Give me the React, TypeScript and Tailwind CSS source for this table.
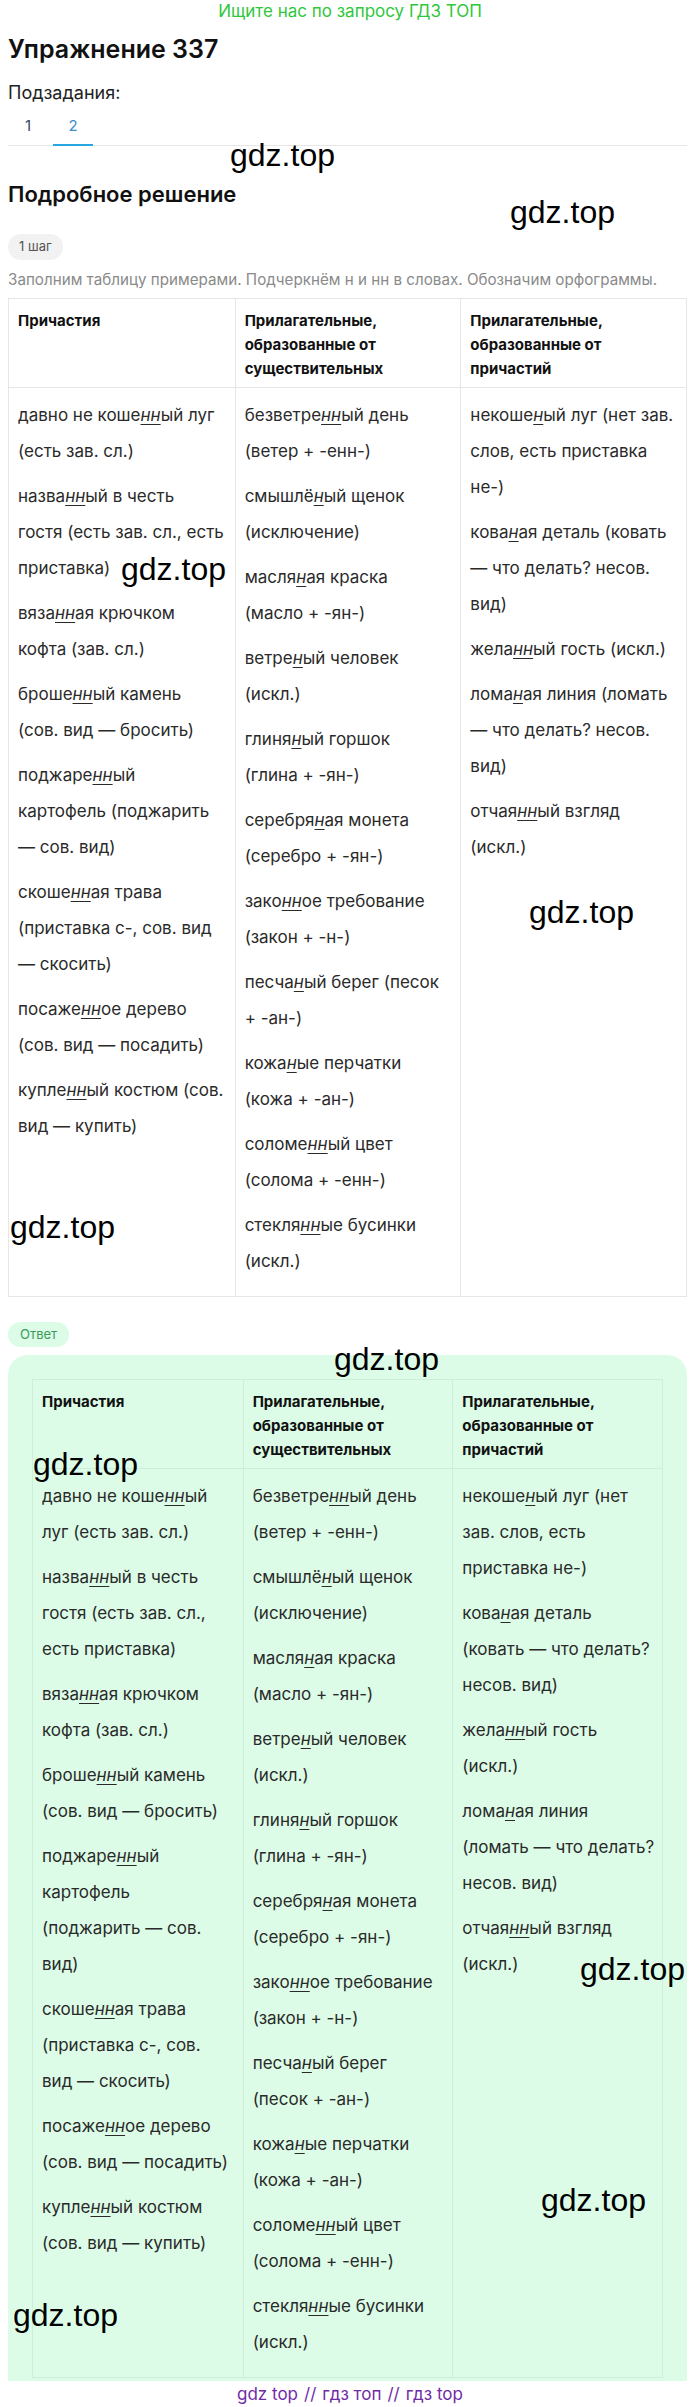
import React from 'react';

type Item = string[];
type TableData = { head: string[][]; cols: Item[][] };

/* words: the letters in [] are the underlined italic н / нн */
const topTable: TableData = {
  head: [['Причастия'], ['Прилагательные,', 'образованные от', 'существительных'], ['Прилагательные,', 'образованные от', 'причастий']],
  cols: [
    [
      ['давно не коше[нн]ый луг', '(есть зав. сл.)'],
      ['назва[нн]ый в честь', 'гостя (есть зав. сл., есть', 'приставка)'],
      ['вяза[нн]ая крючком', 'кофта (зав. сл.)'],
      ['броше[нн]ый камень', '(сов. вид — бросить)'],
      ['поджаре[нн]ый', 'картофель (поджарить', '— сов. вид)'],
      ['скоше[нн]ая трава', '(приставка с-, сов. вид', '— скосить)'],
      ['посаже[нн]ое дерево', '(сов. вид — посадить)'],
      ['купле[нн]ый костюм (сов.', 'вид — купить)'],
    ],
    [
      ['безветре[нн]ый день', '(ветер + -енн-)'],
      ['смышлё[н]ый щенок', '(исключение)'],
      ['масля[н]ая краска', '(масло + -ян-)'],
      ['ветре[н]ый человек', '(искл.)'],
      ['глиня[н]ый горшок', '(глина + -ян-)'],
      ['серебря[н]ая монета', '(серебро + -ян-)'],
      ['зако[нн]ое требование', '(закон + -н-)'],
      ['песча[н]ый берег (песок', '+ -ан-)'],
      ['кожа[н]ые перчатки', '(кожа + -ан-)'],
      ['соломе[нн]ый цвет', '(солома + -енн-)'],
      ['стекля[нн]ые бусинки', '(искл.)'],
    ],
    [
      ['некоше[н]ый луг (нет зав.', 'слов, есть приставка', 'не-)'],
      ['кова[н]ая деталь (ковать', '— что делать? несов.', 'вид)'],
      ['жела[нн]ый гость (искл.)'],
      ['лома[н]ая линия (ломать', '— что делать? несов.', 'вид)'],
      ['отчая[нн]ый взгляд', '(искл.)'],
    ],
  ],
};

const answerTable: TableData = {
  head: topTable.head,
  cols: [
    [
      ['давно не коше[нн]ый', 'луг (есть зав. сл.)'],
      ['назва[нн]ый в честь', 'гостя (есть зав. сл.,', 'есть приставка)'],
      ['вяза[нн]ая крючком', 'кофта (зав. сл.)'],
      ['броше[нн]ый камень', '(сов. вид — бросить)'],
      ['поджаре[нн]ый', 'картофель', '(поджарить — сов.', 'вид)'],
      ['скоше[нн]ая трава', '(приставка с-, сов.', 'вид — скосить)'],
      ['посаже[нн]ое дерево', '(сов. вид — посадить)'],
      ['купле[нн]ый костюм', '(сов. вид — купить)'],
    ],
    [
      ['безветре[нн]ый день', '(ветер + -енн-)'],
      ['смышлё[н]ый щенок', '(исключение)'],
      ['масля[н]ая краска', '(масло + -ян-)'],
      ['ветре[н]ый человек', '(искл.)'],
      ['глиня[н]ый горшок', '(глина + -ян-)'],
      ['серебря[н]ая монета', '(серебро + -ян-)'],
      ['зако[нн]ое требование', '(закон + -н-)'],
      ['песча[н]ый берег', '(песок + -ан-)'],
      ['кожа[н]ые перчатки', '(кожа + -ан-)'],
      ['соломе[нн]ый цвет', '(солома + -енн-)'],
      ['стекля[нн]ые бусинки', '(искл.)'],
    ],
    [
      ['некоше[н]ый луг (нет', 'зав. слов, есть', 'приставка не-)'],
      ['кова[н]ая деталь', '(ковать — что делать?', 'несов. вид)'],
      ['жела[нн]ый гость', '(искл.)'],
      ['лома[н]ая линия', '(ломать — что делать?', 'несов. вид)'],
      ['отчая[нн]ый взгляд', '(искл.)'],
    ],
  ],
};

/* watermark spots, page coords */
const marks = [
  { l: 230, t: 139 }, { l: 510, t: 196 }, { l: 121, t: 553 }, { l: 529, t: 896 }, { l: 10, t: 1211 },
  { l: 334, t: 1343 }, { l: 33, t: 1448 }, { l: 580, t: 1953 }, { l: 541, t: 2184 }, { l: 13, t: 2299 },
];

function Line({ t }: { t: string }) {
  const parts = t.split(/\[(.+?)\]/);
  return (
    <div className="whitespace-nowrap">
      {parts.map((p, i) =>
        i % 2 ? <span key={i} className="italic underline decoration-1 underline-offset-[3px]">{p}</span> : <span key={i}>{p}</span>
      )}
    </div>
  );
}

function Table({ data, border }: { data: TableData; border: string }) {
  return (
    <div className={`border ${border}`}>
      <div className={`grid grid-cols-3 border-b ${border}`}>
        {data.head.map((h, i) => (
          <div key={i} className={`px-[9px] pt-[10px] pb-[6px] text-[15px] leading-[24px] font-bold text-[#111] ${i ? 'border-l ' + border : ''}`}>
            {h.map(l => <div key={l}>{l}</div>)}
          </div>
        ))}
      </div>
      <div className="grid grid-cols-3">
        {data.cols.map((col, i) => (
          <div key={i} className={`px-[9px] pt-[9px] pb-[8px] text-[17px] leading-[36px] text-[#2a2a2a] ${i ? 'border-l ' + border : ''}`}>
            {col.map((item, j) => (
              <div key={j} className="mb-[9px]">
                {item.map(l => <Line key={l} t={l} />)}
              </div>
            ))}
          </div>
        ))}
      </div>
    </div>
  );
}

export default function App() {
  return (
    <div className="relative w-[700px] bg-white font-['Inter','Noto_Sans',sans-serif] text-[#111]">
      {/* ───── banner ───── */}
      <div className="text-center text-[17px] leading-[22px] text-[#2fc73b]">Ищите нас по запросу ГДЗ ТОП</div>

      <div className="ml-2 w-[679px]">
        <h1 className="mt-[11px] text-[25px] leading-[32px] font-semibold">Упражнение 337</h1>
        <div className="mt-[16px] text-[18px] leading-[24px] text-[#222]">Подзадания:</div>

        {/* subtask tabs */}
        <div className="flex gap-[5px] border-b border-[#e6e6e6]">
          <button className="w-10 -mb-px border-b-2 border-transparent pt-[11px] pb-[8px] text-[15px] leading-[20px] text-[#34495e]">1</button>
          <button className="w-10 -mb-px border-b-2 border-[#27a6df] pt-[11px] pb-[8px] text-[15px] leading-[20px] text-[#3a8fc8]">2</button>
        </div>

        <h2 className="mt-[34px] text-[22px] leading-[28px] font-semibold">Подробное решение</h2>
        <div className="mt-[26px] inline-flex h-[26px] items-center rounded-full bg-[#f2f2f2] px-[11px] text-[13px] text-[#555]">1 шаг</div>
        <p className="mt-[8px] text-[15.2px] leading-[24px] text-[#8a8a8a]">Заполним таблицу примерами. Подчеркнём н и нн в словах. Обозначим орфограммы.</p>

        <div className="mt-[6px]">
          <Table data={topTable} border="border-[#e6e6e6]" />
        </div>

        {/* ───── answer ───── */}
        <div className="mt-[25px] inline-flex h-[25px] items-center rounded-full bg-[#dcfce7] px-[12px] text-[13px] text-[#3a9a5c]">Ответ</div>
        <div className="mt-[8px] rounded-t-[20px] bg-[#dcfce7] px-6 pt-6 pb-[3px]">
          <Table data={answerTable} border="border-[#cdeed8]" />
        </div>
      </div>

      <div className="flex h-[27px] items-center justify-center gap-[6px] text-[17px] text-[#6f2ca6]">
        <span>gdz top</span><span>//</span><span>гдз топ</span><span>//</span><span>гдз top</span>
      </div>

      {/* watermarks sit over the content */}
      {marks.map((m, i) => (
        <div
          key={i}
          className="pointer-events-none absolute font-['Liberation_Sans',Arial,sans-serif] text-[32px] leading-none text-black"
          style={{ left: m.l, top: m.t }}
        >
          gdz.top
        </div>
      ))}
    </div>
  );
}
